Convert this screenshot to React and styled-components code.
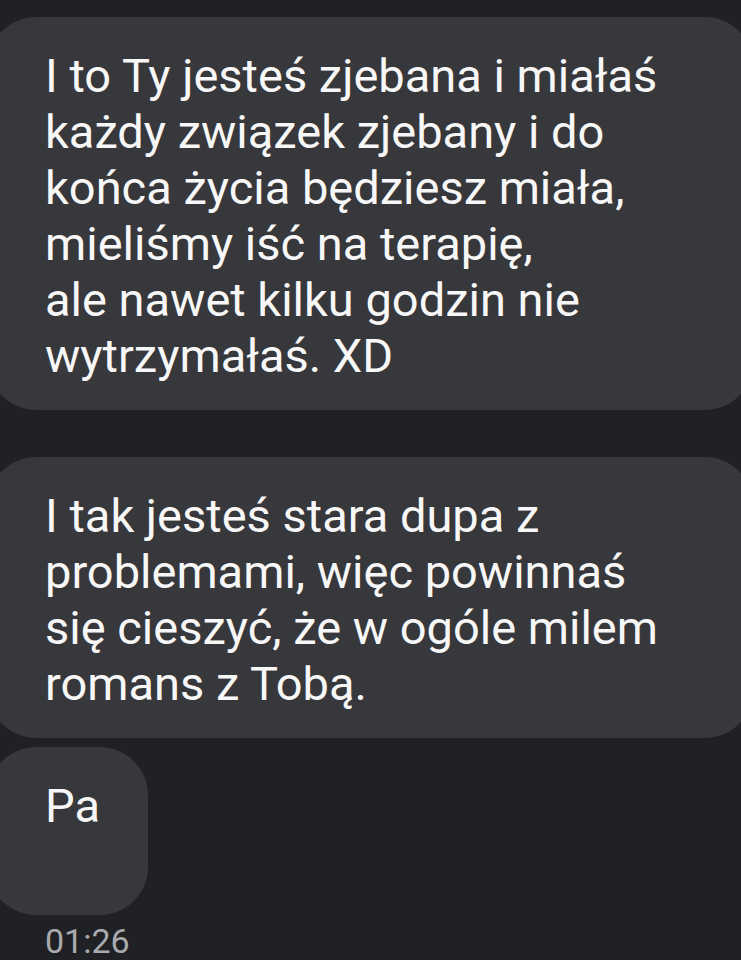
import React from 'react';
import styled, { createGlobalStyle } from 'styled-components';

const GlobalStyle = createGlobalStyle`
  html, body {
    margin: 0;
    padding: 0;
    background: #202125;
  }
  body {
    font-family: Roboto, 'Noto Sans', 'Liberation Sans', sans-serif;
    -webkit-font-smoothing: antialiased;
  }
`;

const Screen = styled.main`
  width: 741px;
  min-height: 960px;
  overflow: hidden;
  background: #202125;
  padding-top: 17px;
  box-sizing: border-box;
  display: flex;
  flex-direction: column;
  align-items: flex-start;
`;

const Bubble = styled.div`
  box-sizing: border-box;
  margin-left: -12px;
  margin-bottom: ${p => p.gap || 0}px;
  width: ${p => (p.narrow ? '160px' : 'calc(100% + 24px)')};
  min-height: ${p => p.minHeight || 0}px;
  padding: 31px 40px 26px 57px;
  background: #37383c;
  border-radius: 48px;
  color: #f7f7f7;
  font-size: 47px;
  line-height: 56px;
  font-weight: 400;
`;

const Line = styled.div`
  white-space: nowrap;
`;

const Time = styled.div`
  margin: 9px 0 0 45px;
  font-size: 34px;
  line-height: 34px;
  color: #a9aaae;
`;

const messages = [
  {
    lines: [
      'I to Ty jesteś zjebana i miałaś',
      'każdy związek zjebany i do',
      'końca życia będziesz miała,',
      'mieliśmy iść na terapię,',
      'ale nawet kilku godzin nie',
      'wytrzymałaś. XD',
    ],
    gap: 47,
  },
  {
    lines: [
      'I tak jesteś stara dupa z',
      'problemami, więc powinnaś',
      'się cieszyć, że w ogóle milem',
      'romans z Tobą.',
    ],
    gap: 9,
  },
  { lines: ['Pa'], narrow: true, minHeight: 168 },
];

export default function App() {
  return (
    <>
      <GlobalStyle />
      <Screen>
        {messages.map((m, i) => (
          <Bubble key={i} gap={m.gap} narrow={m.narrow} minHeight={m.minHeight}>
            {m.lines.map((l, j) => (
              <Line key={j}>{l}</Line>
            ))}
          </Bubble>
        ))}
        <Time>01:26</Time>
      </Screen>
    </>
  );
}
